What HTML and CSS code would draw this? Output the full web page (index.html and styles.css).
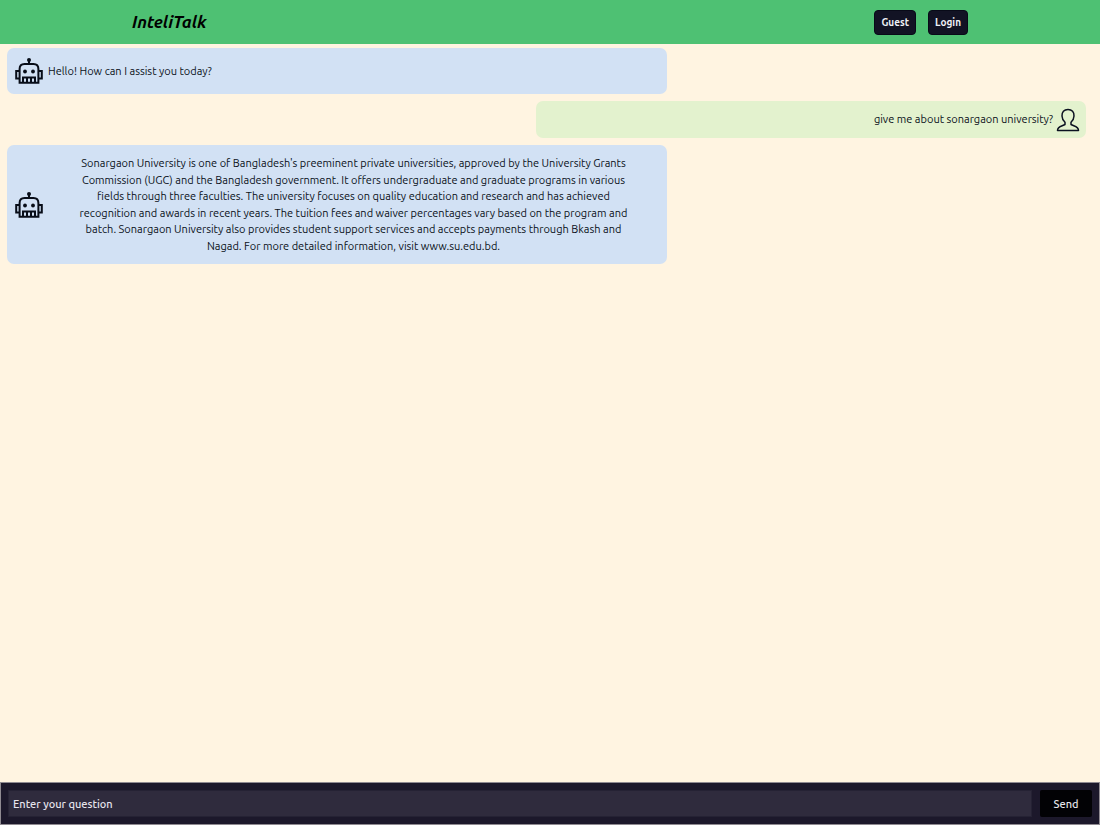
FILE: index.html
```html
<!DOCTYPE html>
<html lang="en">
<head>
  <meta charset="UTF-8" />
  <meta name="viewport" content="width=device-width, initial-scale=1.0" />
  <title>InteliTalk</title>
  <link rel="stylesheet" href="styles.css">
</head>
<body>
  <svg class="sprite" aria-hidden="true">
    <symbol id="robot" viewBox="0 0 28 26">
      <circle cx="14" cy="2" r="2" fill="currentColor" />
      <path d="M14 3v3M4.600 24.800V11Q4.600 6 9.500 6H18.500Q23.400 6 23.400 11V24.800ZM4 13H1.200V20.500H4M24 13H26.800V20.500H24M8 24V19.500H20V24M12 20V24M16 20V24" fill="none" stroke="currentColor" stroke-width="2" />
      <circle cx="10" cy="13.500" r="1.900" fill="currentColor" />
      <circle cx="18" cy="13.500" r="1.900" fill="currentColor" />
    </symbol>
    <symbol id="user" viewBox="0 0 24 24">
      <path d="M12 1.500C8 1.500 5.800 4 6 8C6.100 11 7.500 13 9 14.300V16.500C6 18.300 1.500 18.300 1.500 22.500H22.500C22.500 18.300 18 18.300 15 16.500V14.300C16.500 13 17.900 11 18 8C18.200 4 16 1.500 12 1.500Z" fill="none" stroke="currentColor" stroke-width="1.500" stroke-linejoin="round" />
    </symbol>
  </svg>

  <header class="navbar">
    <div class="nav-inner">
      <h1 class="logo">InteliTalk</h1>
      <div class="nav-buttons">
        <button type="button">Guest</button>
        <button type="button">Login</button>
      </div>
    </div>
  </header>

  <main class="chat">
    <div class="message bot">
      <svg class="robot-icon" role="img" aria-label="Bot"><use href="#robot" /></svg>
      <p>Hello! How can I assist you today?</p>
    </div>
    <div class="message user">
      <p>give me about sonargaon university?</p>
      <svg class="user-icon" role="img" aria-label="You"><use href="#user" /></svg>
    </div>
    <div class="message bot answer">
      <svg class="robot-icon" role="img" aria-label="Bot"><use href="#robot" /></svg>
      <p>Sonargaon University is one of Bangladesh's preeminent private universities, approved by the University Grants Commission (UGC) and the Bangladesh government. It offers undergraduate and graduate programs in various fields through three faculties. The university focuses on quality education and research and has achieved recognition and awards in recent years. The tuition fees and waiver percentages vary based on the program and batch. Sonargaon University also provides student support services and accepts payments through Bkash and Nagad. For more detailed information, visit www.su.edu.bd.</p>
    </div>
  </main>

  <form class="ask" onsubmit="return false">
    <input type="text" placeholder="Enter your question" aria-label="Enter your question">
    <button type="submit">Send</button>
  </form>
</body>
</html>
```
FILE: styles.css
```css
* {
  box-sizing: border-box;
}
body {
  margin: 0;
  min-height: 100vh;
  display: flex;
  flex-direction: column;
  background: #fff4e1;
  color: #0b1120;
  font-family: Ubuntu, "Noto Sans", sans-serif;
  font-size: 11px;
  line-height: 1.5;
}
button, input {
  font-family: inherit;
}
.sprite {
  display: none;
}
.navbar {
  background: #4ec173;
}
.nav-inner {
  width: 76%;
  height: 44px;
  margin: 0 auto;
  display: flex;
  align-items: center;
  justify-content: space-between;
}
.logo {
  margin: 0;
  color: #000;
  font-size: 17px;
  font-style: italic;
  font-weight: 700;
}
.nav-buttons {
  display: flex;
  gap: 12px;
}
.nav-buttons button {
  height: 25px;
  padding: 0 6px;
  border: 1px solid #080a18;
  border-radius: 4px;
  background: #121324;
  color: #eef0f6;
  font-size: 10px;
  font-weight: 700;
  cursor: pointer;
}
.chat {
  flex: 1;
  display: flex;
  flex-direction: column;
  gap: 7px;
  padding: 4px 14px 7px 7px;
}
.message {
  display: flex;
  align-items: center;
  border-radius: 7px;
}
.message p {
  margin: 0;
}
.bot {
  width: 660px;
  max-width: 100%;
  min-height: 46px;
  padding: 8px;
  gap: 5px;
  background: #d2e1f4;
}
.user {
  align-self: flex-end;
  width: 550px;
  max-width: 100%;
  min-height: 37px;
  padding: 6px;
  gap: 3px;
  justify-content: flex-end;
  background: #e3f2ce;
}
.answer {
  padding: 10px 8px;
}
.answer p {
  flex: 1;
  padding: 0 20px;
  text-align: center;
}
.robot-icon {
  flex: none;
  width: 28px;
  height: 28px;
  color: #080d18;
}
.user-icon {
  flex: none;
  width: 24px;
  height: 24px;
}
.ask {
  display: flex;
  gap: 8px;
  padding: 7px;
  border: 1px solid #8f8a91;
  background: #1c182b;
}
.ask input {
  flex: 1;
  min-width: 0;
  height: 27px;
  padding: 0 4px;
  border: 1px solid #252234;
  background: #2f2b3d;
  color: #fff;
  font-size: 11px;
  font-weight: 500;
}
.ask input::placeholder {
  color: #e6e4ec;
  opacity: 1;
}
.ask button {
  width: 52px;
  height: 27px;
  padding: 0;
  border: 0;
  border-radius: 2px;
  background: #020205;
  color: #e6e6ea;
  font-size: 11px;
  font-weight: 500;
  cursor: pointer;
}
```
